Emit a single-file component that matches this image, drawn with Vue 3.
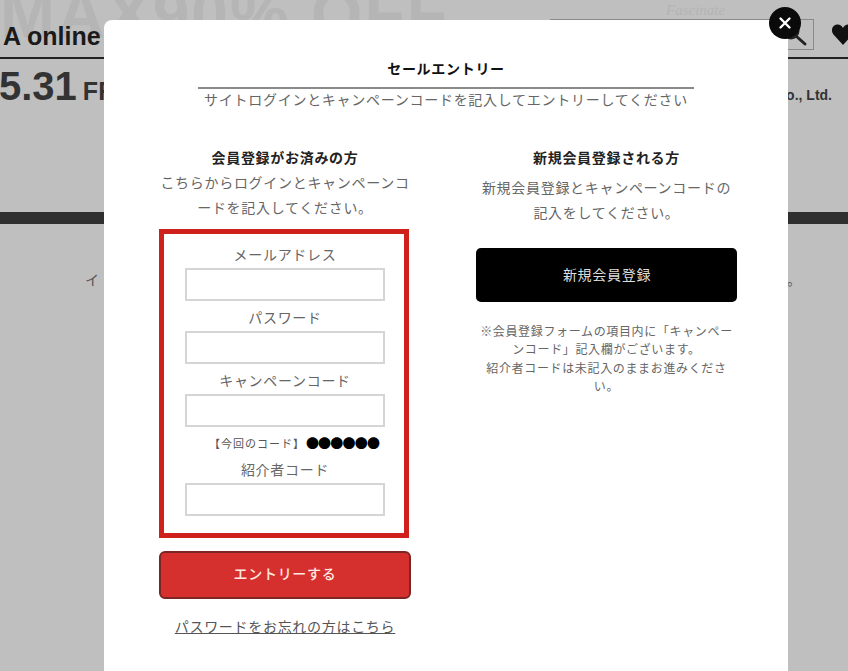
<script setup>
const fields = [
  { label: 'メールアドレス' },
  { label: 'パスワード' },
  { label: 'キャンペーンコード', hint: true },
  { label: '紹介者コード' }
]
</script>

<template>
  <div class="page">
    <div class="bg-sale">MAX90% OFF</div>
    <div class="bg-script">Fascinate</div>
    <header class="bg-header">
      <span class="bg-title">A online</span>
      <div class="bg-search">
        <svg width="28" height="28" viewBox="0 0 28 28" fill="none" stroke="#222" stroke-width="3">
          <circle cx="10" cy="10" r="7" />
          <path d="M15 15l9 8" stroke-linecap="round" />
        </svg>
      </div>
      <svg class="bg-heart" width="24" height="24" viewBox="0 0 24 24" fill="#111">
        <path d="M12 23 2.500 12.500C-.5 9 1 3 6 2.500c2.700-.3 4.800 1 6 3.500 1.200-2.500 3.300-3.800 6-3.500 5 .5 6.500 6.500 3.500 10z" />
      </svg>
    </header>
    <div class="bg-date">
      <span class="bg-day">5.31</span><span class="bg-week">FRI</span>
      <span class="bg-company">Co., Ltd.</span>
    </div>
    <div class="bg-band"></div>
    <p class="bg-copy"><span>イ</span><span>す。</span></p>

    <div class="modal">
      <button class="close" type="button" aria-label="閉じる">
        <svg width="14" height="14" viewBox="0 0 14 14" stroke="#fff" stroke-width="2.400" stroke-linecap="round">
          <path d="M2.500 2.500l9 9M11.500 2.500l-9 9" />
        </svg>
      </button>

      <div class="head">
        <h2>セールエントリー</h2>
        <p>サイトログインとキャンペーンコードを記入してエントリーしてください</p>
      </div>

      <div class="cols">
        <section class="col">
          <h3>会員登録がお済みの方</h3>
          <p class="lead">こちらからログインとキャンペーンコードを記入してください。</p>
          <div class="form-box">
            <div v-for="f in fields" :key="f.label" class="field">
              <label>{{ f.label }}</label>
              <input type="text" />
              <div v-if="f.hint" class="hint">【今回のコード】<b>●●●●●●</b></div>
            </div>
          </div>
          <button class="btn-entry" type="button">エントリーする</button>
          <a class="forgot" href="#">パスワードをお忘れの方はこちら</a>
        </section>

        <section class="col right">
          <h3>新規会員登録される方</h3>
          <p class="lead">新規会員登録とキャンペーンコードの<br />記入をしてください。</p>
          <button class="btn-new" type="button">新規会員登録</button>
          <p class="note">※会員登録フォームの項目内に「キャンペー<br />ンコード」記入欄がございます。<br />紹介者コードは未記入のままお進みくださ<br />い。</p>
        </section>
      </div>
    </div>
  </div>
</template>

<style>
html, body {
  margin: 0;
  background: #bfbfbf;
}
</style>

<style scoped>
.page {
  position: relative;
  width: 848px;
  height: 671px;
  overflow: hidden;
  background: #bfbfbf;
  font-family: "Noto Sans CJK JP", "Noto Sans", sans-serif;
  color: #555;
}
.bg-sale {
  position: absolute;
  left: 0;
  top: -24px;
  font: 700 66px "Liberation Sans", sans-serif;
  letter-spacing: 2px;
  color: #b5b5b5;
  white-space: nowrap;
}
.bg-script {
  position: absolute;
  left: 666px;
  top: 2px;
  font: italic 15px "Liberation Serif", serif;
  color: #b4b4b4;
}
.bg-header {
  position: relative;
  box-sizing: border-box;
  height: 59px;
  padding-top: 19px;
  border-bottom: 2px solid #222;
  display: flex;
  align-items: flex-start;
}
.bg-title {
  margin-left: 3px;
  font: 700 25px/34px "Liberation Sans", sans-serif;
  color: #1a1a1a;
  white-space: nowrap;
}
.bg-search {
  box-sizing: border-box;
  margin-left: auto;
  width: 264px;
  height: 31px;
  border: 1px solid #8a8a8a;
  display: flex;
  justify-content: flex-end;
  align-items: center;
  padding-right: 4px;
}
.bg-heart {
  margin: 3px -7px 0 17px;
  flex: none;
}
.bg-date {
  display: flex;
  align-items: baseline;
  height: 153px;
  margin-left: -1px;
  color: #333;
  font-family: "Liberation Sans", sans-serif;
  font-weight: 700;
  line-height: 54px;
}
.bg-day {
  font-size: 40px;
}
.bg-week {
  margin-left: 6px;
  font-size: 25px;
}
.bg-company {
  margin-left: auto;
  margin-right: 16px;
  font-size: 14px;
  color: #333;
}
.bg-band {
  height: 12px;
  background: #2f2f2f;
}
.bg-copy {
  display: flex;
  justify-content: space-between;
  margin: 45px 47px 0 85px;
  font-size: 14px;
  line-height: 20px;
}
.modal {
  position: absolute;
  left: 104px;
  top: 20px;
  box-sizing: border-box;
  width: 684px;
  height: 680px;
  padding: 35px 51px 0 55px;
  background: #fff;
  border-radius: 8px 8px 0 0;
}
.close {
  position: absolute;
  top: -13px;
  right: -13px;
  width: 32px;
  height: 32px;
  padding: 0;
  border: 0;
  border-radius: 50%;
  background: #0a0a0a;
  display: flex;
  align-items: center;
  justify-content: center;
}
.head {
  padding-right: 4px;
  text-align: center;
}
.head h2 {
  margin: 0 auto;
  padding-bottom: 6px;
  border-bottom: 2px solid #8a8a8a;
  width: 496px;
  font-size: 14px;
  line-height: 26px;
  font-weight: 700;
  letter-spacing: .7px;
  color: #111;
}
.head p {
  margin: 0;
  font-size: 14px;
  line-height: 20px;
  letter-spacing: .72px;
  white-space: nowrap;
  color: #666;
}
.cols {
  display: grid;
  grid-template-columns: 252px 261px;
  justify-content: space-between;
  margin-top: 36px;
}
.col {
  display: flex;
  flex-direction: column;
  align-items: center;
  text-align: center;
}
.col h3 {
  margin: 0;
  font-size: 14px;
  line-height: 24px;
  font-weight: 700;
  letter-spacing: .7px;
  color: #222;
}
.lead {
  margin: 1px 0 0;
  width: 252px;
  font-size: 14px;
  line-height: 25px;
  letter-spacing: .7px;
  color: #666;
}
.form-box {
  box-sizing: border-box;
  width: 250px;
  height: 309px;
  margin-top: 9px;
  padding: 8px 19px 0 21px;
  border: 5px solid #d0201c;
  align-self: flex-start;
}
.field {
  display: flex;
  flex-direction: column;
  align-items: center;
}
.field label {
  padding-bottom: 2px;
  font-size: 14px;
  line-height: 24px;
  letter-spacing: .7px;
  color: #666;
}
.field input {
  box-sizing: border-box;
  width: 200px;
  height: 33px;
  margin-bottom: 4px;
  border: 2px solid #d5d5d5;
  background: #fff;
}
.hint {
  display: flex;
  align-items: center;
  margin: 4px 0 6px 18px;
  font-size: 11px;
  line-height: 16px;
  letter-spacing: 1px;
  color: #555;
  white-space: nowrap;
}
.hint b {
  margin-left: 1px;
  font-size: 13px;
  letter-spacing: -.8px;
  color: #000;
  font-weight: 400;
}
.btn-entry {
  box-sizing: border-box;
  align-self: flex-start;
  width: 252px;
  height: 48px;
  margin-top: 13px;
  padding: 0 0 5px;
  border: 2px solid #7c2624;
  border-radius: 6px;
  background: #d6302e;
  color: #ffe9e4;
  font: 500 14px "Noto Sans CJK JP", sans-serif;
  letter-spacing: .7px;
}
.forgot {
  margin-top: 16px;
  font-size: 14px;
  line-height: 22px;
  letter-spacing: .7px;
  color: #555;
  text-decoration: underline;
}
.right {
  width: 261px;
}
.right .lead {
  width: 261px;
  margin-top: 6px;
}
.btn-new {
  width: 261px;
  height: 54px;
  margin-top: 23px;
  padding: 0 0 3px 1px;
  border: 0;
  border-radius: 5px;
  background: #000;
  color: #ddd;
  font: 400 14px "Noto Sans CJK JP", sans-serif;
  letter-spacing: .7px;
}
.note {
  margin: 20px 0 0;
  font-size: 12px;
  line-height: 18.400px;
  letter-spacing: .65px;
  color: #666;
  white-space: nowrap;
}
</style>
